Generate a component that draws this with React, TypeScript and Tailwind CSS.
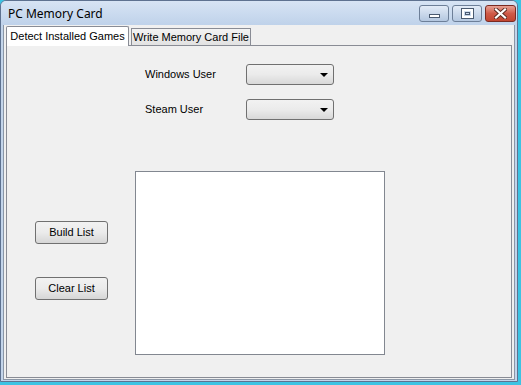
import React from "react";

const ui = { fontFamily: '"Liberation Sans", Arial, sans-serif' };

function Combo() {
  return (
    <div className="w-[88px] h-[21px] rounded-[3px] border border-[#707070] bg-gradient-to-b from-[#f2f2f2] via-[#ebebeb] to-[#d8d8d8] flex items-center justify-end pr-[5px]">
      <div className="w-0 h-0 border-l-[4px] border-r-[4px] border-t-[4px] border-l-transparent border-r-transparent border-t-black" />
    </div>
  );
}

function Btn({ label }: { label: string }) {
  return (
    <button className="w-[73px] h-[23px] rounded-[3px] border border-[#707070] bg-gradient-to-b from-[#f2f2f2] via-[#ebebeb] to-[#d6d6d6] text-[11px] text-black flex items-center justify-center">
      {label}
    </button>
  );
}

export default function App() {
  return (
    <div className="w-[521px] h-[385px] bg-[#3cc3e3]" style={ui}>
      <div className="w-[518px] h-[382px] border border-[#5e7290] rounded-t-[6px] bg-[#c3d5eb] flex flex-col">
        {/* title bar */}
        <div className="h-[24px] flex items-start bg-gradient-to-b from-[#d7e4f4] to-[#bfd2ea] rounded-t-[5px]">
          <div className="pl-[7px] pt-[4px] text-[12px] text-black" style={{ fontFamily: '"Noto Sans", "Open Sans", sans-serif' }}>
            PC Memory Card
          </div>
          <div className="ml-auto flex gap-[3px] pt-[4px] pr-[1px]">
            <div className="w-[30px] h-[17px] rounded-[3px] border border-[#6d7f98] bg-gradient-to-b from-[#e3ecf7] to-[#b4c7e0] flex items-end justify-center pb-[3px]">
              <div className="w-[11px] h-[4px] bg-white border border-[#4a5a70]" />
            </div>
            <div className="w-[30px] h-[17px] rounded-[3px] border border-[#6d7f98] bg-gradient-to-b from-[#e3ecf7] to-[#b4c7e0] flex items-center justify-center">
              <div className="w-[11px] h-[9px] border-2 border-white outline outline-1 outline-[#4a5a70] flex items-center justify-center">
                <div className="w-[5px] h-[3px] border border-[#4a5a70]" />
              </div>
            </div>
            <div className="w-[31px] h-[17px] rounded-[3px] border border-[#7a2a22] bg-gradient-to-b from-[#e6a094] via-[#cf5a48] to-[#c24530] flex items-center justify-center">
              <svg width="13" height="11" viewBox="0 0 13 11">
                <path d="M2 1.5 L11 9.5 M11 1.5 L2 9.5" stroke="#5a2a22" strokeWidth="4" strokeLinecap="square" />
                <path d="M2 1.5 L11 9.5 M11 1.5 L2 9.5" stroke="#ffffff" strokeWidth="2.2" strokeLinecap="square" />
              </svg>
            </div>
          </div>
        </div>

        {/* client area */}
        <div className="flex-1 mx-[2px] mb-[1px] border-l border-r border-b border-[#8a96a6] bg-[#f0f0f0] flex flex-col pl-[2px] pr-[2px] pb-[1px]">
          {/* tab strip */}
          <div className="flex items-end h-[20px] text-[11px] text-black relative z-10">
            <div className="h-[20px] w-[123px] bg-white border border-b-0 border-[#898c95] rounded-t-[2px] flex items-center justify-center -mb-[1px] pb-[1px]">
              Detect Installed Games
            </div>
            <div className="h-[17px] w-[120px] ml-[2px] bg-gradient-to-b from-[#f3f3f3] to-[#e2e2e2] border border-b-0 border-[#898c95] flex items-center justify-center">
              Write Memory Card File
            </div>
          </div>
          {/* tab page */}
          <div className="flex-1 border border-[#898c95] bg-[#f0f0f0] flex flex-col text-[11px] text-black">
            <div className="pl-[138px] pt-[18px] flex flex-col gap-[14px]">
              <div className="flex items-center">
                <span className="w-[101px]">Windows User</span>
                <Combo />
              </div>
              <div className="flex items-center">
                <span className="w-[101px]">Steam User</span>
                <Combo />
              </div>
            </div>
            <div className="flex mt-[51px] pl-[28px]">
              <div className="flex flex-col pt-[50px] gap-[33px]">
                <Btn label="Build List" />
                <Btn label="Clear List" />
              </div>
              <div className="ml-[27px] w-[250px] h-[184px] border border-[#828790] bg-white" />
            </div>
          </div>
        </div>
      </div>
    </div>
  );
}
